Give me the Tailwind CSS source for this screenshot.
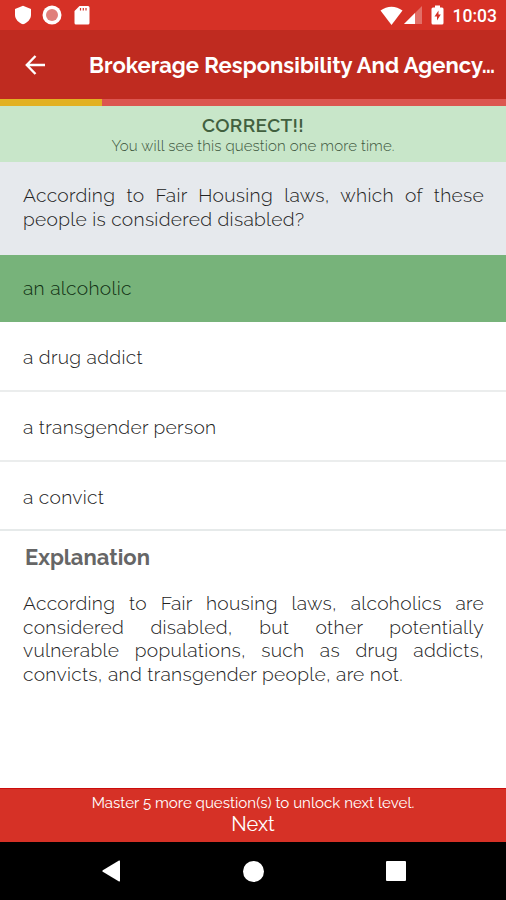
<!DOCTYPE html>
<html lang="en">
<head>
  <meta charset="UTF-8" />
  <meta name="viewport" content="width=device-width, initial-scale=1.0" />
  <title>Brokerage Responsibility And Agency</title>

  <!-- Tailwind CSS -->
  <script src="https://cdn.jsdelivr.net/npm/@tailwindcss/browser@4"></script>
</head>

<body class="bg-white font-['Raleway','Lato',sans-serif] text-[#222]">
  <div class="flex h-[900px] w-[506px] flex-col overflow-hidden">

    <!-- Status bar -->
    <div class="flex h-[30px] shrink-0 items-center justify-between bg-[#d63126] pl-[14px] pr-[9px] text-white">
      <div class="flex items-center">
        <svg class="h-[20px] w-[18px]" viewBox="0 0 18 20" fill="currentColor"><path d="M9 .8 17 4v6c0 4-3.600 8-8 9.300C4.600 18 1 14 1 10V4z" /></svg>
        <svg class="ml-[10px] size-[20px]" viewBox="0 0 20 20"><circle cx="10" cy="10" r="9.500" fill="#fff" /><circle cx="10" cy="10" r="6" fill="#e0807b" /></svg>
        <svg class="ml-[12px] h-[20px] w-[16px]" viewBox="0 0 16 20"><path d="M5.500 1H14a1.500 1.500 0 0 1 1.500 1.500v15.500a1.500 1.500 0 0 1-1.500 1.500H2A1.500 1.500 0 0 1 .5 18V6z" fill="#fff" /><path d="M6.500 3v2.500M9.300 3v2.500M12 3v2.500" stroke="#d63126" stroke-width="1.200" /></svg>
      </div>
      <div class="flex items-center">
        <svg class="h-[19px] w-[23px]" viewBox="0 0 23 19" fill="currentColor"><path d="M.5 4.500C7-.6 16-.6 22.500 4.500L11.500 19z" /></svg>
        <svg class="ml-[1px] h-[18px] w-[18px]" viewBox="0 0 18 18" fill="currentColor"><path d="M0 18 18 0v18z" opacity=".3" /><path d="M0 18 11 7v11z" /></svg>
        <svg class="ml-[9px] h-[20px] w-[13px]" viewBox="0 0 13 20"><path d="M4 .5h5v2h2A1.500 1.500 0 0 1 12.500 4v14a1.500 1.500 0 0 1-1.500 1.500H2A1.500 1.500 0 0 1 .5 18V4A1.500 1.500 0 0 1 2 2.500h2z" fill="#fff" /><path d="M7.500 5.500 3.500 11.500h2.500v4L9.800 9.500H7.500z" fill="#d63126" /></svg>
        <span class="ml-[9px] pt-[2px] font-['Roboto',sans-serif] text-[17.500px] font-medium leading-[30px]">10:03</span>
      </div>
    </div>

    <!-- App bar -->
    <header class="flex h-[69px] shrink-0 items-center bg-[#bf2b20] pl-[25px] text-white">
      <svg class="h-[20px] w-[20px]" viewBox="0 0 20 20" fill="none" stroke="currentColor" stroke-width="2.400"><path d="M20 10H2M10.500 1 1.800 10l8.700 9" /></svg>
      <h1 class="ml-[44px] whitespace-nowrap pt-px text-[22px] font-bold tracking-[0.03px]">Brokerage Responsibility And Agency…</h1>
    </header>

    <!-- Progress -->
    <div class="h-[7px] shrink-0 bg-[#dc5650]">
      <div class="h-full w-[102px] bg-[#e2b122]"></div>
    </div>

    <main class="flex flex-1 flex-col">
      <div class="flex h-[56px] flex-col items-center bg-[#c8e6c9] pt-[8px]">
        <div class="text-[19px] font-semibold leading-[23px] tracking-[0.35px] text-[#41603f]">CORRECT!!</div>
        <div class="text-[15px] font-light leading-[18px] tracking-[0.12px] text-[#3d563d]">You will see this question one more time.</div>
      </div>

      <div class="h-[93px] bg-[#e6e9ed] pl-[23px] pr-[22px] pt-[22px] text-justify text-[19.200px] font-light leading-[23.500px] tracking-[0.3px]">
        According to Fair Housing laws, which of these people is considered disabled?
      </div>

      <ul class="text-[19.200px] font-light tracking-[0.3px]">
        <li class="flex h-[67px] items-center bg-[#77b37a] px-[23px] text-[#0f2e12]">an alcoholic</li>
        <li class="flex h-[70px] items-center border-b-2 border-[#ebeded] px-[23px] pt-[3px]">a drug addict</li>
        <li class="flex h-[70px] items-center border-b-2 border-[#ebeded] px-[23px] pt-[3px]">a transgender person</li>
        <li class="flex h-[69px] items-center border-b-2 border-[#e6eaea] px-[23px] pt-[3px]">a convict</li>
      </ul>

      <h2 class="mt-[12px] px-[25px] text-[22px] font-bold leading-[28px] text-[#666]">Explanation</h2>
      <p class="mt-[21px] pl-[23px] pr-[22px] text-justify text-[19.200px] font-light leading-[23.500px] tracking-[0.3px]">
        According to Fair housing laws, alcoholics are considered disabled, but other potentially vulnerable populations, such as drug addicts, convicts, and transgender people, are not.
      </p>
    </main>

    <button class="flex h-[54px] shrink-0 flex-col items-center border-t border-[#cc0c0c] bg-[#d63126] pt-[4px] text-white">
      <span class="text-[15.100px] leading-[20px]">Master 5 more question(s) to unlock next level.</span>
      <span class="text-[20px] leading-[22px]">Next</span>
    </button>

    <!-- Navigation bar -->
    <nav class="flex h-[58px] shrink-0 items-center justify-between bg-black pl-[102px] pr-[100px] text-white">
      <svg class="h-[22px] w-[19px]" viewBox="0 0 19 22" fill="currentColor"><path d="M17 .6q1-.4 1 .7v19.400q0 1.100-1 .7L.8 11.800q-1-.8 0-1.600z" /></svg>
      <div class="size-[21px] rounded-full bg-white"></div>
      <div class="size-[20px] rounded-[1px] bg-white"></div>
    </nav>
  </div>
</body>
</html>
